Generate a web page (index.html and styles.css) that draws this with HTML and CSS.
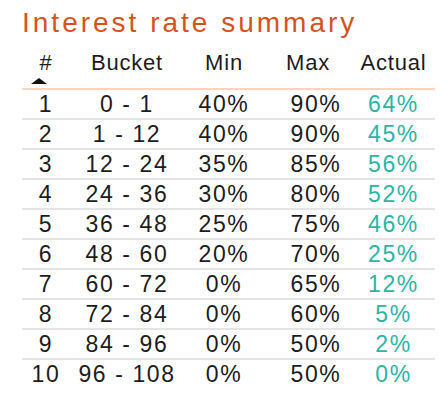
FILE: index.html
```html
<!DOCTYPE html>
<html>

<head>
  <title>Interest rate summary</title>
  <link rel="stylesheet" href="styles.css">
</head>

<body>
  <h1 class="title">Interest rate summary</h1>

  <table class="rates">
    <thead>
      <tr>
        <th class="col-num">#<span class="sort-up"></span></th>
        <th class="col-bucket">Bucket</th>
        <th class="col-min">Min</th>
        <th class="col-max">Max</th>
        <th class="col-actual">Actual</th>
      </tr>
    </thead>
    <tbody id="rate-rows"></tbody>
  </table>

  <script>
    const rows = [
      [1, "0 - 1", "40%", "90%", "64%"],
      [2, "1 - 12", "40%", "90%", "45%"],
      [3, "12 - 24", "35%", "85%", "56%"],
      [4, "24 - 36", "30%", "80%", "52%"],
      [5, "36 - 48", "25%", "75%", "46%"],
      [6, "48 - 60", "20%", "70%", "25%"],
      [7, "60 - 72", "0%", "65%", "12%"],
      [8, "72 - 84", "0%", "60%", "5%"],
      [9, "84 - 96", "0%", "50%", "2%"],
      [10, "96 - 108", "0%", "50%", "0%"]
    ];

    const body = document.getElementById("rate-rows");
    let html = "";
    rows.forEach(function (r) {
      html += `<tr>
        <td>${r[0]}</td>
        <td>${r[1]}</td>
        <td>${r[2]}</td>
        <td class="max">${r[3]}</td>
        <td class="actual">${r[4]}</td>
      </tr>`;
    });
    body.innerHTML = html;
  </script>
</body>

</html>
```

FILE: styles.css
```css
body {
  margin: 0;
  background-color: #fff;
  font-family: "Liberation Sans", Arial, sans-serif;
  color: #1c1c1c;
}

.title {
  margin: 7px 0 0 22px;
  font-size: 28px;
  line-height: 32px;
  font-weight: normal;
  letter-spacing: 3px;
  color: #d4531c;
}

.rates {
  margin-left: 22px;
  width: 413px;
  border-collapse: collapse;
  table-layout: fixed;
}

.rates th {
  height: 37px;
  padding: 12px 0 0;
  vertical-align: top;
  font-size: 22px;
  line-height: 24px;
  font-weight: normal;
  letter-spacing: 0.8px;
  border-bottom: 2px solid #ffd3bd;
}

.col-num {
  width: 48px;
}

.col-bucket {
  width: 114px;
}

.col-min {
  width: 80px;
}

.col-max {
  width: 88px;
}

.col-actual {
  width: 83px;
}

.sort-up {
  display: block;
  width: 0;
  height: 0;
  margin: 3px 0 0 9px;
  border-left: 8px solid transparent;
  border-right: 8px solid transparent;
  border-bottom: 6px solid #111;
}

.rates td {
  height: 28px;
  padding: 0;
  text-align: center;
  font-size: 23px;
  line-height: 28px;
  letter-spacing: 1.6px;
  border-bottom: 2px solid #e4e4e4;
}

.rates tbody tr:last-child td {
  border-bottom: none;
}

.rates td.max {
  padding-left: 16px;
}

.rates td.actual {
  color: #2bb5a6;
}
```
